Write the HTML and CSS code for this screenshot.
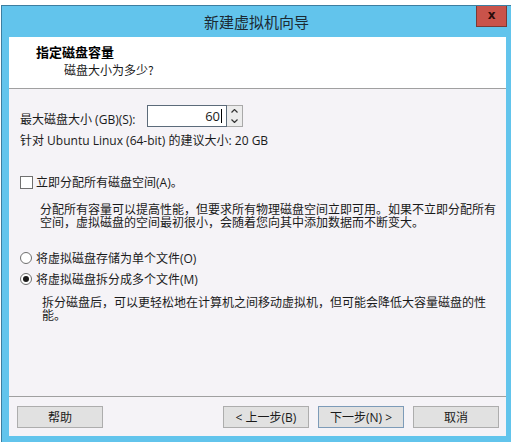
FILE: index.html
```html
<!DOCTYPE html>
<html>
<head>
<meta charset="utf-8">
<link rel="stylesheet" href="styles.css">
</head>
<body>
<div class="window">
  <div class="titlebar">
    <div class="title">新建虚拟机向导</div>
    <div class="close">x</div>
  </div>
  <div class="client">
    <div class="header">
      <div class="h-title">指定磁盘容量</div>
      <div class="h-sub">磁盘大小为多少?</div>
    </div>
    <div class="body">
      <div class="row size-row">
        <span class="size-label">最大磁盘大小 (GB)(S):</span>
        <div class="input"><span class="val">60</span><span class="caret"></span></div>
        <div class="spin">
          <div class="spin-btn"><svg width="7" height="4" viewBox="0 0 7 4"><path d="M0.5 3.5 L3.5 0.5 L6.5 3.5" fill="none" stroke="#333" stroke-width="1.2"/></svg></div>
          <div class="spin-btn"><svg width="7" height="4" viewBox="0 0 7 4"><path d="M0.5 0.5 L3.5 3.5 L6.5 0.5" fill="none" stroke="#333" stroke-width="1.2"/></svg></div>
        </div>
      </div>
      <div class="line suggest">针对 Ubuntu Linux (64-bit) 的建议大小: 20 GB</div>
      <div class="row check-row"><span class="checkbox"></span><span>立即分配所有磁盘空间(A)。</span></div>
      <div class="desc desc1">
        <div>分配所有容量可以提高性能，但要求所有物理磁盘空间立即可用。如果不立即分配所有</div>
        <div>空间，虚拟磁盘的空间最初很小，会随着您向其中添加数据而不断变大。</div>
      </div>
      <div class="row radio-row r1"><span class="radio"></span><span>将虚拟磁盘存储为单个文件(O)</span></div>
      <div class="row radio-row r2"><span class="radio on"></span><span>将虚拟磁盘拆分成多个文件(M)</span></div>
      <div class="desc desc2">
        <div>拆分磁盘后，可以更轻松地在计算机之间移动虚拟机，但可能会降低大容量磁盘的性</div>
        <div>能。</div>
      </div>
    </div>
    <div class="footer">
      <div class="btn">帮助</div>
      <div class="spacer"></div>
      <div class="btn">&lt; 上一步(B)</div>
      <div class="btn default">下一步(N) &gt;</div>
      <div class="btn">取消</div>
    </div>
  </div>
</div>
</body>
</html>
```
FILE: styles.css
```css
html, body { margin: 0; padding: 0; background: #ffffff; }
body {
  width: 513px; height: 442px; overflow: hidden;
  font-family: "Open Sans", "Noto Sans CJK SC", sans-serif;
  font-size: 12px; color: #1a1a1a;
}
.window {
  margin: 5px 0 0 1px;
  width: 510px; height: 437px;
  background: #62c4ec;
  border-top: 1px solid #3d7ea0;
  border-left: 1px solid #3d7ea0;
  box-sizing: border-box;
  display: flex; flex-direction: column;
}
.titlebar {
  height: 31px; position: relative;
  display: flex; align-items: center; justify-content: center;
}
.title {
  font-family: "Noto Sans CJK SC", sans-serif;
  font-size: 15px; color: #1c2a33; margin-top: -1px;
}
.close {
  position: absolute; right: 4px; top: 0;
  width: 31px; height: 21px; box-sizing: border-box;
  background: #c9534a; border: 1px solid #7a3a36; border-top: none;
  color: #2a0c0a; font-family: "DejaVu Sans", sans-serif; font-weight: bold;
  font-size: 12px; line-height: 18px; text-align: center;
}
.client {
  margin-left: 7px; width: 497px; height: 399px;
  background: #f5f3f7;
  display: flex; flex-direction: column;
}
.header {
  height: 52px; background: #ffffff;
  border-bottom: 1px solid #a0a0a0;
  box-sizing: border-box;
  padding: 7px 0 0 27px;
  font-family: "Noto Sans CJK SC", sans-serif;
}
.h-title { font-weight: bold; font-size: 13px; line-height: 16px; color: #000; }
.h-sub { padding-left: 28px; font-size: 12px; line-height: 14px; margin-top: 3px; }
.body {
  height: 308px; box-sizing: border-box;
  padding: 16px 0 0 11px;
  display: flex; flex-direction: column;
  border-bottom: 1px solid #a0a0a0;
}
.row { display: flex; align-items: center; }
.size-row { height: 22px; }
.size-label { width: 127px; margin-top: 6px; }
.input {
  width: 80px; height: 22px; box-sizing: border-box;
  background: #fff; border: 1px solid #5c6b7a;
  display: flex; align-items: center; justify-content: flex-end;
  padding-right: 4px; font-size: 13px;
}
.val { line-height: 14px; }
.caret { width: 1px; height: 14px; background: #000; margin-left: 1px; }
.spin {
  width: 16px; height: 22px; box-sizing: border-box;
  border: 1px solid #a9a9a9; border-left: none; background: #ececec;
  display: flex; flex-direction: column;
}
.spin-btn { flex: 1; display: flex; align-items: center; justify-content: center; }
.line { line-height: 14px; }
.suggest { margin-top: 7px; }
.check-row { height: 14px; margin-top: 27px; }
.checkbox {
  width: 13px; height: 13px; box-sizing: border-box;
  border: 1px solid #707070; background: #fff; margin-right: 3px;
}
.desc {
  font-family: "Noto Sans CJK SC", sans-serif;
  line-height: 13px; padding-left: 20px;
}
.desc1 { margin-top: 13px; }
.radio-row { height: 14px; }
.r1 { margin-top: 23px; }
.r2 { margin-top: 7px; }
.radio {
  width: 12px; height: 12px; box-sizing: border-box; border-radius: 50%;
  border: 1px solid #6f6f6f; background: #fff; margin-right: 4px;
  display: flex; align-items: center; justify-content: center;
}
.radio.on::after {
  content: ""; width: 6px; height: 6px; border-radius: 50%; background: #1a1a1a;
}
.desc2 { margin-top: 9px; padding-left: 22px; }
.footer {
  flex: 1; display: flex; align-items: flex-start;
  padding: 9px 0 0 8px; gap: 9px;
}
.spacer { flex: 1; }
.btn {
  width: 86px; height: 22px; box-sizing: border-box;
  background: #e1e1e1; border: 1px solid #adadad;
  display: flex; align-items: center; justify-content: center;
  font-family: "Open Sans", "Noto Sans CJK SC", sans-serif;
}
.btn:last-child { margin-right: 7px; }
.btn.default { border-color: #7d9bb8; }
```
